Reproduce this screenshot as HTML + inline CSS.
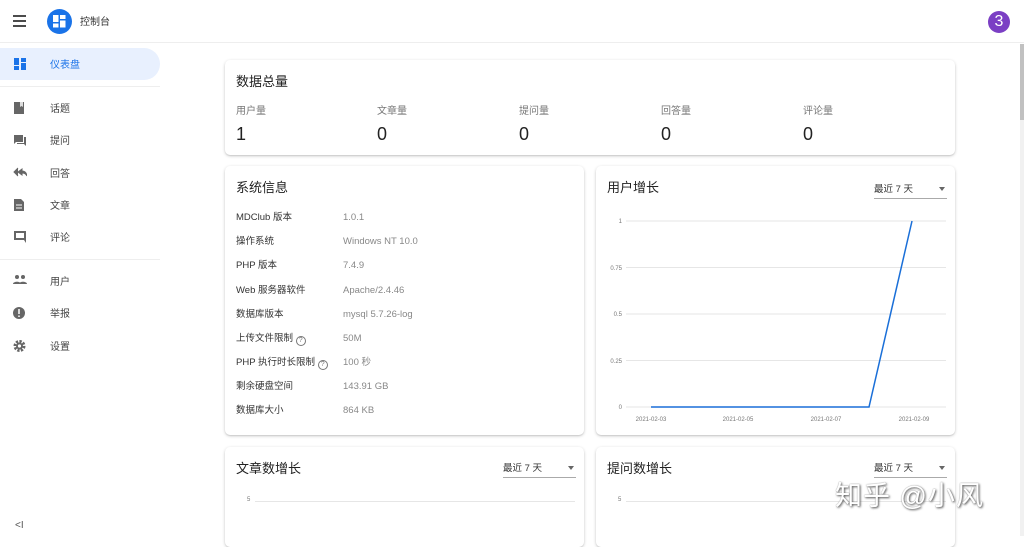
<!DOCTYPE html>
<html><head><meta charset="utf-8"><style>
*{margin:0;padding:0;box-sizing:border-box}
body{width:1024px;height:536px;overflow:hidden;background:#fff;font-family:"Liberation Sans","Noto Sans CJK SC",sans-serif;color:#333;position:relative}
.hdr{position:absolute;left:0;top:0;width:1024px;height:43px;border-bottom:1px solid #eee;background:#fff}
.abs{position:absolute}
.side .it{position:absolute;left:0;width:160px;height:32px;font-size:10px;color:#444}
.side .it span{position:absolute;left:50px;top:11px;line-height:14px}
.side .it svg{position:absolute;left:13px;top:9px}
.card{position:absolute;background:#fff;border-radius:5px;box-shadow:0 1px 3px rgba(0,0,0,.2),0 1px 1px rgba(0,0,0,.08)}
.t{position:absolute;font-size:13px;color:#222;line-height:18px}
.lbl{position:absolute;font-size:10px;color:#777}
.num{position:absolute;font-size:18px;color:#222}
.row{position:absolute;left:11px;font-size:9.5px;color:#333;line-height:14px;white-space:nowrap}
.row b{font-weight:normal;position:absolute;left:107px;top:0;color:#888;white-space:nowrap}
.sel{position:absolute;width:73px;height:21px;border-bottom:1px solid #aaa;font-size:9.5px;color:#333}
.sel:after{content:"";position:absolute;right:2px;top:9px;border:3.5px solid transparent;border-top:4px solid #666}
.q{display:inline-block;width:10px;height:10px;border:1px solid #777;border-radius:50%;font-size:7px;text-align:center;line-height:8px;color:#777;vertical-align:-1px}
</style></head><body>
<div class="hdr">
<svg class="abs" style="left:13px;top:15px" width="14" height="12"><path d="M0 1h13M0 6h13M0 11h13" stroke="#333" stroke-width="1.8"/></svg>
<div class="abs" style="left:47px;top:9px;width:25px;height:25px;border-radius:50%;background:#1a73e8"></div>
<svg class="abs" style="left:53px;top:15px" width="13" height="13"><rect x="0" y="0" width="5.5" height="7" fill="#fff"/><rect x="7" y="0" width="5.5" height="4" fill="#fff"/><rect x="0" y="8.5" width="5.5" height="4" fill="#fff"/><rect x="7" y="5.5" width="5.5" height="7" fill="#fff"/></svg>
<div class="abs" style="left:80px;top:13px;font-size:10px;color:#333">控制台</div>
<div class="abs" style="left:988px;top:11px;width:22px;height:22px;border-radius:50%;background:#7b3fc4;color:#fff;font-size:16px;text-align:center;line-height:22px">3</div>
</div>
<div class="side">
<div class="abs" style="left:0;top:48px;width:160px;height:32px;background:#e8f0fe;border-radius:0 16px 16px 0"></div>
<svg class="abs" style="left:14px;top:58px" width="12" height="12"><path d="M0 0h5v7H0zM7 0h5v4H7zM0 8h5v4H0zM7 5h5v7H7z" fill="#1a73e8"/></svg>
<div class="abs" style="left:50px;top:59px;font-size:10px;color:#1a73e8;line-height:14px">仪表盘</div>
<div class="abs" style="left:0;top:86px;width:160px;border-top:1px solid #eee"></div>
<div class="it" style="top:92px"><svg width="12" height="14"><path d="M1 1h10v12H1z" fill="#666"/><path d="M7 1h3v5l-1.5-1-1.5 1z" fill="#ddd"/></svg><span>话题</span></div>
<div class="it" style="top:124px"><svg width="14" height="14"><path d="M1 2h9v7H3L1 11z" fill="#666"/><path d="M11 4h2v9l-2-2H4V10h7z" fill="#666"/></svg><span>提问</span></div>
<div class="it" style="top:157px"><svg width="14" height="12"><path d="M5 2L1 6l4 4M9 3L5 6l4 3v-2c2 0 4 1 5 3-.5-3-2-5-5-5z" stroke="#666" fill="#666" stroke-width="1"/></svg><span>回答</span></div>
<div class="it" style="top:189px"><svg width="12" height="14"><path d="M1 1h7l3 3v9H1z" fill="#666"/><path d="M3 7h6M3 10h6" stroke="#fff"/></svg><span>文章</span></div>
<div class="it" style="top:221px"><svg width="14" height="14"><path d="M1 1h12v9H1z" fill="#666"/><path d="M3 3h8v5H3z" fill="#fff"/><path d="M11 10h2v3z" fill="#666"/></svg><span>评论</span></div>
<div class="abs" style="left:0;top:259px;width:160px;border-top:1px solid #eee"></div>
<div class="it" style="top:265px"><svg width="14" height="12"><circle cx="4" cy="3" r="2" fill="#666"/><circle cx="10" cy="3" r="2" fill="#666"/><path d="M0 10c0-3 8-3 8 0zM6 10c0-3 8-3 8 0z" fill="#666"/></svg><span>用户</span></div>
<div class="it" style="top:297px"><svg width="14" height="14"><circle cx="6" cy="7" r="6" fill="#666"/><path d="M6 3v5M6 9.5v1.5" stroke="#fff" stroke-width="1.5"/></svg><span>举报</span></div>
<div class="it" style="top:330px"><svg width="14" height="14"><circle cx="6.5" cy="7" r="4.5" fill="none" stroke="#666" stroke-width="3" stroke-dasharray="2.2 1.3"/><circle cx="6.5" cy="7" r="3.5" fill="#666"/><circle cx="6.5" cy="7" r="1.6" fill="#fff"/></svg><span>设置</span></div>
<div class="abs" style="left:15px;top:520px;font-size:10px;color:#555">&lt;I</div>
</div>

<div class="card" style="left:225px;top:60px;width:730px;height:95px">
<div class="t" style="left:11px;top:13px">数据总量</div>
<div class="lbl" style="left:11px;top:42px">用户量</div><div class="num" style="left:11px;top:64px">1</div>
<div class="lbl" style="left:152px;top:42px">文章量</div><div class="num" style="left:152px;top:64px">0</div>
<div class="lbl" style="left:294px;top:42px">提问量</div><div class="num" style="left:294px;top:64px">0</div>
<div class="lbl" style="left:436px;top:42px">回答量</div><div class="num" style="left:436px;top:64px">0</div>
<div class="lbl" style="left:578px;top:42px">评论量</div><div class="num" style="left:578px;top:64px">0</div>
</div>

<div class="card" style="left:225px;top:166px;width:359px;height:269px">
<div class="t" style="left:11px;top:13px">系统信息</div>
<div class="row" style="top:45px">MDClub 版本<b>1.0.1</b></div>
<div class="row" style="top:69px">操作系统<b>Windows NT 10.0</b></div>
<div class="row" style="top:93px">PHP 版本<b>7.4.9</b></div>
<div class="row" style="top:118px">Web 服务器软件<b>Apache/2.4.46</b></div>
<div class="row" style="top:142px">数据库版本<b>mysql 5.7.26-log</b></div>
<div class="row" style="top:166px">上传文件限制 <span class="q">?</span><b>50M</b></div>
<div class="row" style="top:190px">PHP 执行时长限制 <span class="q">?</span><b>100 秒</b></div>
<div class="row" style="top:214px">剩余硬盘空间<b>143.91 GB</b></div>
<div class="row" style="top:238px">数据库大小<b>864 KB</b></div>
</div>

<div class="card" style="left:596px;top:166px;width:359px;height:269px">
<div class="t" style="left:11px;top:13px">用户增长</div>
<div class="sel" style="left:278px;top:12px"><span style="position:absolute;left:0;top:3px">最近 7 天</span></div>
<svg class="abs" style="left:0;top:0" width="359" height="269">
<g stroke="#e6e6e6" stroke-width="1"><path d="M30 55h320M30 101.5h320M30 148h320M30 194.5h320M30 241h320"/></g>
<g font-size="6" fill="#777" font-family="Liberation Sans" text-anchor="end"><text x="26" y="57">1</text><text x="26" y="104">0.75</text><text x="26" y="150">0.5</text><text x="26" y="197">0.25</text><text x="26" y="243">0</text></g>
<g font-size="6" fill="#777" font-family="Liberation Sans" text-anchor="middle"><text x="55" y="255">2021-02-03</text><text x="142" y="255">2021-02-05</text><text x="230" y="255">2021-02-07</text><text x="318" y="255">2021-02-09</text></g>
<path d="M55 241H273L316 55" fill="none" stroke="#1a6fd8" stroke-width="1.5"/>
</svg>
</div>

<div class="card" style="left:225px;top:447px;width:359px;height:100px">
<div class="t" style="left:11px;top:13px">文章数增长</div>
<div class="sel" style="left:278px;top:10px"><span style="position:absolute;left:0;top:3px">最近 7 天</span></div>
<div class="abs" style="left:30px;top:54px;width:320px;border-top:1px solid #e6e6e6"></div>
<div class="abs" style="left:22px;top:50px;font-size:6px;color:#777">5</div>
</div>
<div class="card" style="left:596px;top:447px;width:359px;height:100px">
<div class="t" style="left:11px;top:13px">提问数增长</div>
<div class="sel" style="left:278px;top:10px"><span style="position:absolute;left:0;top:3px">最近 7 天</span></div>
<div class="abs" style="left:30px;top:54px;width:320px;border-top:1px solid #e6e6e6"></div>
<div class="abs" style="left:22px;top:50px;font-size:6px;color:#777">5</div>
</div>
<div class="abs" style="left:835px;top:474px;font-size:27px;color:#fff;text-shadow:1px 1px 2px #555,0 0 1px #888;letter-spacing:1px">知乎 @小风</div>
<div class="abs" style="left:1020px;top:44px;width:4px;height:492px;background:#f1f1f1"></div>
<div class="abs" style="left:1020px;top:44px;width:4px;height:76px;background:#c1c1c1"></div>
</body></html>
